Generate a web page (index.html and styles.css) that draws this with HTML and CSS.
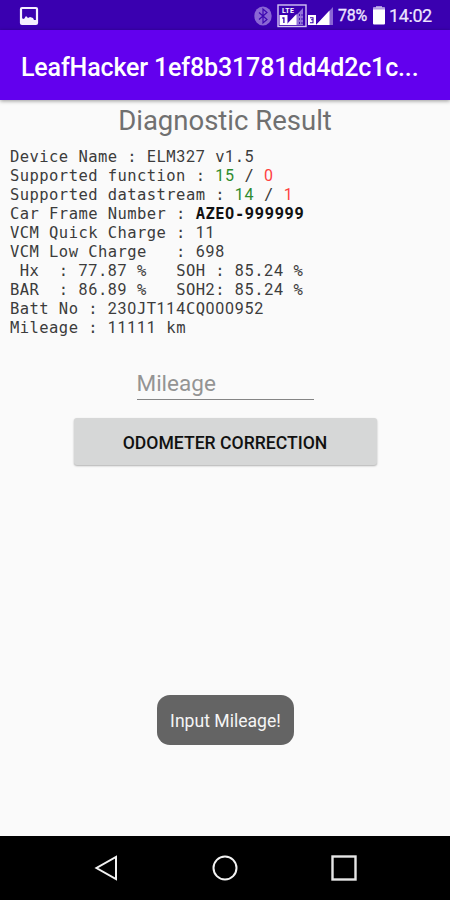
FILE: index.html
```
<!DOCTYPE html>
<html lang="en">
<head>
    <meta charset="UTF-8">
    <meta name="viewport" content="width=device-width, initial-scale=1.0">
    <title>LeafHacker</title>
    <link rel="stylesheet" href="styles.css">
</head>
<body>
    <div class="status-bar">
        <svg class="picture-icon" width="20" height="20" viewBox="0 0 20 20">
            <rect x="2" y="2" width="16" height="16" rx="1" fill="none" stroke="#f4efff" stroke-width="2.2"/>
            <path d="M2 17v-5l3 1 2-3 2 2 2-1 3 1 1 2h3v3z" fill="#f4efff"/>
        </svg>
        <svg class="bluetooth-icon" width="18" height="20" viewBox="0 0 18 20">
            <ellipse cx="9" cy="10" rx="8.7" ry="9.5" fill="#8a66d4"/>
            <path d="M5 6.5l8 7-4 3.5V3l4 3.5-8 7" fill="none" stroke="#3c08b0" stroke-width="1.2"/>
        </svg>
        <svg class="lte-icon" width="30" height="24" viewBox="0 0 30 24">
            <rect x="1" y="1" width="28" height="21.5" fill="none" stroke="#d2c4f2" stroke-width="1.4"/>
            <text class="lte-text" x="5" y="9.3" textLength="12">LTE</text>
            <path d="M26 4v17H10z" fill="#9273d8"/>
            <path d="M19.5 10v11H9z" fill="#fff"/>
            <path d="M22.5 10v11M25 10v11" stroke="#4215b4" stroke-width="1" stroke-dasharray="2 2"/>
            <rect x="2.5" y="11" width="8" height="10" fill="#fff"/>
            <path d="M5.3 14h1.6v5" fill="none" stroke="#3a00b0" stroke-width="1.3"/>
        </svg>
        <svg class="signal-icon" width="26" height="19" viewBox="0 0 26 19">
            <path d="M25 0v18H8z" fill="#8a66d4"/>
            <path d="M21.5 3.5V18H8z" fill="#fff"/>
            <rect x="0" y="8" width="8" height="10" fill="#fff"/>
            <path d="M2 10.7h3v2H3h2v3H2" fill="none" stroke="#3a00b0" stroke-width="1.1"/>
        </svg>
        <span class="battery-level">78%</span>
        <svg class="battery-icon" width="12" height="19" viewBox="0 0 12 19">
            <rect x="3" y="0" width="6" height="2" fill="#a68bdf"/>
            <rect x="0" y="1.5" width="12" height="17" rx="1" fill="#fff"/>
            <rect x="0" y="1.5" width="12" height="2" fill="#b29be3"/>
        </svg>
        <span class="clock">14:02</span>
    </div>

    <header class="app-bar">
        <h1>LeafHacker 1ef8b31781dd4d2c1c...</h1>
    </header>

    <main class="content">
        <h2>Diagnostic Result</h2>
<pre class="report">Device Name : ELM<span class="num">327</span> v<span class="num">1</span>.<span class="num">5</span>
Supported function : <span class="num ok">15</span> / <span class="num fail">0</span>
Supported datastream : <span class="num ok">14</span> / <span class="num fail">1</span>
Car Frame Number : <b>AZE<span class="num">0</span>-<span class="num">999999</span></b>
VCM Quick Charge : <span class="num">11</span>
VCM Low Charge   : <span class="num">698</span>
 Hx  : <span class="num">77</span>.<span class="num">87</span> %   SOH : <span class="num">85</span>.<span class="num">24</span> %
BAR  : <span class="num">86</span>.<span class="num">89</span> %   SOH<span class="num">2</span>: <span class="num">85</span>.<span class="num">24</span> %
Batt No : <span class="num">230</span>JT<span class="num">114</span>CQ<span class="num">000952</span>
Mileage : <span class="num">11111</span> km</pre>
        <form id="odometerForm">
            <input type="text" id="mileage" name="mileage" placeholder="Mileage">
            <button type="button">ODOMETER CORRECTION</button>
        </form>
    </main>

    <div class="toast">Input Mileage!</div>

    <nav class="nav-bar">
        <svg width="26" height="28" viewBox="0 0 26 28">
            <path d="M22 3v22L2.5 14z" fill="none" stroke="#f2f2f2" stroke-width="2"/>
        </svg>
        <svg width="28" height="28" viewBox="0 0 28 28">
            <circle cx="14" cy="14" r="11.5" fill="none" stroke="#f2f2f2" stroke-width="2"/>
        </svg>
        <svg width="28" height="28" viewBox="0 0 28 28">
            <rect x="2.5" y="2.5" width="23" height="23" fill="none" stroke="#e6e6e6" stroke-width="2.4"/>
        </svg>
    </nav>
</body>
</html>
```
FILE: styles.css
```
* {
    box-sizing: border-box;
}

body {
    display: flex;
    flex-direction: column;
    height: 900px;
    margin: 0;
    overflow: hidden;
    font-family: Roboto, sans-serif;
    background-color: #fafafa;
}

.status-bar {
    display: flex;
    align-items: center;
    height: 30px;
    padding: 1px 17px 0 19px;
    background-color: #3a00b0;
    color: #eee6ff;
    flex-shrink: 0;
}

.status-bar svg,
.status-bar span {
    flex-shrink: 0;
}

.bluetooth-icon {
    margin-left: auto;
}

.lte-icon {
    margin-left: 5px;
}

.lte-text {
    font: bold 7px Roboto, sans-serif;
    fill: #fff;
}

.signal-icon {
    margin-left: 1px;
    margin-top: 2px;
}

.battery-level {
    width: 30px;
    margin-left: 4px;
    font-size: 16px;
    letter-spacing: -0.3px;
    -webkit-text-stroke: 0.3px;
}

.battery-icon {
    margin-left: 5px;
}

.clock {
    width: 44px;
    margin-left: 4px;
    font-size: 18px;
    letter-spacing: -0.4px;
    white-space: nowrap;
    -webkit-text-stroke: 0.2px;
}

.app-bar {
    display: flex;
    align-items: center;
    height: 70px;
    padding: 4px 20px 0 21px;
    background-color: #6200ee;
    box-shadow: 0 1px 4px rgba(0, 0, 0, 0.4);
    flex-shrink: 0;
}

h1 {
    margin: 0;
    color: #fff;
    font-size: 25px;
    font-weight: 500;
    letter-spacing: -0.15px;
    white-space: nowrap;
}

.content {
    flex: 1;
}

h2 {
    margin: 4px 0 0;
    color: #707070;
    font-size: 27.5px;
    font-weight: 400;
    line-height: 34px;
    text-align: center;
}

.report {
    margin: 10px 0 0 10px;
    color: #3c3c3c;
    font-family: "DejaVu Sans Mono", monospace;
    font-size: 15.5px;
    line-height: 19.05px;
    letter-spacing: 0.44px;
}

/* plain zeros, same advance as the monospace letters */
.num {
    font-family: Roboto, sans-serif;
    font-size: 16px;
    line-height: 1;
    letter-spacing: 0.78px;
}

.report b {
    color: #111;
}

.report .ok {
    color: #2e8b2e;
}

.report .fail {
    color: #ff4040;
}

#odometerForm {
    display: flex;
    flex-direction: column;
    align-items: center;
    margin-top: 27px;
}

#mileage {
    width: 177px;
    height: 35px;
    padding: 2px 0 0;
    border: none;
    border-bottom: 1px solid #858585;
    background: none;
    font-family: Roboto, sans-serif;
    font-size: 22.5px;
}

#mileage::placeholder {
    color: #949494;
}

button {
    width: 303px;
    height: 47px;
    margin-top: 18px;
    padding: 2px 0 0;
    border: none;
    border-radius: 3px;
    background-color: #d6d7d7;
    box-shadow: 0 1px 2px rgba(0, 0, 0, 0.3);
    color: #111;
    font-family: Roboto, sans-serif;
    font-size: 17.6px;
    font-weight: 500;
}

.toast {
    position: absolute;
    top: 695px;
    left: 157px;
    width: 137px;
    height: 50px;
    border-radius: 13px;
    background-color: #646464;
    color: #f5f5f5;
    font-size: 17.6px;
    line-height: 53px;
    text-align: center;
    white-space: nowrap;
}

.nav-bar {
    display: flex;
    align-items: center;
    justify-content: space-between;
    height: 64px;
    padding: 0 92px 0 94px;
    background-color: #000;
    flex-shrink: 0;
}
```
